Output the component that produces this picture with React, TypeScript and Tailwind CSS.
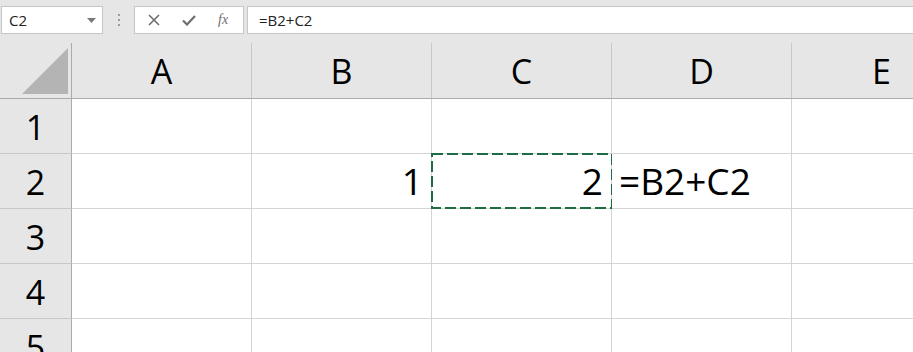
import React from 'react';

const font = { fontFamily: '"Open Sans", "Noto Sans", sans-serif' };

const cols = ['A', 'B', 'C', 'D', 'E'];
const rows = [1, 2, 3, 4, 5];

const Marquee: React.FC = () => (
  <svg className="absolute left-[-1px] top-[-1px] pointer-events-none" width="182" height="56" viewBox="0 0 182 56">
    <rect x="1" y="1" width="180" height="54" fill="none" stroke="#1e6c41" strokeWidth="2" strokeDasharray="11 4" shapeRendering="crispEdges" />
  </svg>
);

const App: React.FC = () => {
  return (
    <div className="w-[913px] h-[352px] overflow-hidden bg-[#e6e6e6] text-black" style={font}>
      {/* formula bar */}
      <div className="h-[43px] flex items-start pt-[6px] pl-[1px]">
        <div className="w-[102px] h-[28px] bg-white border border-[#c6c6c6] flex items-center justify-between pl-[7px] pr-[6px]">
          <span className="text-[15px] text-[#222]">C2</span>
          <svg width="9" height="5" viewBox="0 0 9 5">
            <path d="M0 0h9L4.5 5z" fill="#7a7a7a" />
          </svg>
        </div>
        <div className="w-[31px] h-[28px] flex flex-col items-center justify-center gap-[3px]">
          <span className="w-[2px] h-[2px] bg-[#9a9a9a]" />
          <span className="w-[2px] h-[2px] bg-[#9a9a9a]" />
          <span className="w-[2px] h-[2px] bg-[#9a9a9a]" />
        </div>
        <div className="w-[110px] h-[28px] bg-white border border-[#c6c6c6] flex items-center pl-[13px] gap-[22px]">
          <svg width="12" height="12" viewBox="0 0 12 12">
            <path d="M1 1l10 10M11 1L1 11" stroke="#6e6e6e" strokeWidth="1.6" />
          </svg>
          <svg width="14" height="11" viewBox="0 0 14 11">
            <path d="M1 5.5l4 4L13 1" stroke="#6e6e6e" strokeWidth="2.2" fill="none" />
          </svg>
          <span className="text-[14px] italic text-[#6e6e6e] leading-none" style={{ fontFamily: '"Liberation Serif", serif' }}>
            fx
          </span>
        </div>
        <div className="ml-[3px] flex-1 h-[28px] bg-white border border-r-0 border-[#c6c6c6] flex items-center pl-[11px]">
          <span className="text-[15px] text-[#222]">=B2+C2</span>
        </div>
      </div>

      {/* column headers */}
      <div className="flex h-[56px] border-b border-[#ababab]">
        <div className="w-[72px] shrink-0 border-r border-[#ababab] relative">
          <svg className="absolute left-[22px] top-[4px]" width="47" height="48" viewBox="0 0 47 48">
            <path d="M0 47L46 47L46 1z" fill="#b4b4b4" />
          </svg>
        </div>
        {cols.map((c) => (
          <div key={c} className="w-[180px] shrink-0 border-r border-[#c8c8c8] flex items-center justify-center text-[34px] pt-[2px]">
            {c}
          </div>
        ))}
      </div>

      {/* rows */}
      {rows.map((r) => (
        <div key={r} className="flex h-[55px]">
          <div className="w-[72px] shrink-0 border-r border-b border-r-[#ababab] border-b-[#c8c8c8] flex items-center justify-center text-[34px] pt-[2px]">
            {r}
          </div>
          {cols.map((c) => {
            const text = r === 2 ? (c === 'B' ? '1' : c === 'C' ? '2' : c === 'D' ? '=B2+C2' : '') : '';
            const left = c === 'D';
            return (
              <div
                key={c}
                className={`relative w-[180px] shrink-0 bg-white border-r border-b border-[#d4d4d4] flex items-end pb-[2px] text-[37px] leading-[50px] whitespace-nowrap ${left ? 'justify-start pl-[7px]' : 'justify-end pr-[8px]'}`}
              >
                {text}
                {r === 2 && c === 'C' && <Marquee />}
              </div>
            );
          })}
        </div>
      ))}
    </div>
  );
};

export default App;
